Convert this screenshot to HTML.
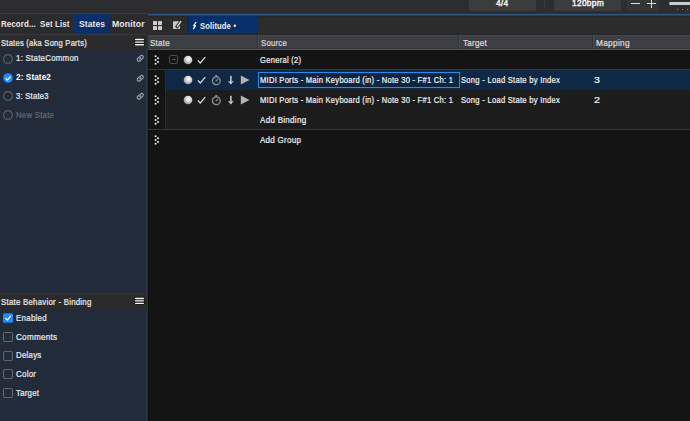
<!DOCTYPE html>
<html><head><meta charset="utf-8">
<style>
*{margin:0;padding:0;box-sizing:border-box}
html,body{width:690px;height:421px;overflow:hidden;background:#141414;font-family:"Liberation Sans",sans-serif;color:#e6e6e6}
.a{position:absolute;display:block}
.t{position:absolute;white-space:pre;line-height:1;font-size:9px;transform-origin:0 0}
.b{font-weight:bold}
</style></head><body>
<div class="a" style="left:0px;top:0px;width:690px;height:14px;background:#2d2d30;"></div>
<div class="a" style="left:148px;top:12px;width:542px;height:1px;background:#2a2c31;"></div>
<div class="a" style="left:0px;top:13px;width:148px;height:1px;background:#3a3a3d;"></div>
<div class="a" style="left:148px;top:13px;width:542px;height:1px;background:#3a302b;"></div>
<div class="a" style="left:148px;top:14px;width:542px;height:1px;background:#2d5480;"></div>
<div class="a" style="left:148px;top:15px;width:542px;height:1px;background:#1f4164;"></div>
<div class="a" style="left:148px;top:16px;width:542px;height:1px;background:#2c2422;"></div>
<div class="a" style="left:469px;top:0px;width:67px;height:11px;background:#3c3c3c;border-radius:0 0 2px 2px"></div>
<div class="t" style="left:496.32px;top:-1px;color:#f4f4f4;font-size:9px;font-weight:normal;letter-spacing:0.3px;-webkit-text-stroke:0.45px #f4f4f4;transform:scaleX(0.9254);">4/4</div>
<div class="a" style="left:544px;top:0px;width:1px;height:9px;background:#3c3c3c;"></div>
<div class="a" style="left:554px;top:0px;width:67px;height:11px;background:#3c3c3c;border-radius:0 0 2px 2px"></div>
<div class="t" style="left:571.56px;top:-1px;color:#f4f4f4;font-size:9px;font-weight:normal;letter-spacing:0.3px;-webkit-text-stroke:0.45px #f4f4f4;transform:scaleX(0.9335);">120bpm</div>
<div class="a" style="left:627px;top:0px;width:32px;height:11px;background:#353535;border-radius:0 0 2px 2px"></div>
<div class="a" style="left:631px;top:3px;width:9px;height:1.2px;background:#dddddd;"></div>
<div class="a" style="left:647px;top:3px;width:9px;height:1.2px;background:#dddddd;"></div>
<div class="a" style="left:651px;top:0px;width:1.2px;height:8px;background:#dddddd;"></div>
<div class="a" style="left:669px;top:2px;width:21px;height:3px;background:#cccccc;border-radius:2px 0 0 2px"></div>
<div class="a" style="left:677px;top:9px;width:1px;height:1.4px;background:#8a8a8a;"></div>
<div class="a" style="left:682px;top:9px;width:1px;height:1.4px;background:#8a8a8a;"></div>
<div class="a" style="left:687px;top:9px;width:1px;height:1.4px;background:#8a8a8a;"></div>
<div class="a" style="left:0px;top:14px;width:147px;height:20px;background:#2b2b2e;"></div>
<div class="a" style="left:73px;top:14px;width:37px;height:20px;background:#0a2f6a;"></div>
<div class="t" style="left:1.09px;top:20px;color:#e8e8e8;font-size:9px;font-weight:bold;letter-spacing:0.1px;-webkit-text-stroke:0px #e8e8e8;transform:scaleX(0.8831);">Record...</div>
<div class="t" style="left:39.93px;top:20px;color:#e8e8e8;font-size:9px;font-weight:bold;letter-spacing:0.1px;-webkit-text-stroke:0px #e8e8e8;transform:scaleX(0.8849);">Set List</div>
<div class="t" style="left:78.50px;top:20px;color:#e8e8e8;font-size:9px;font-weight:bold;letter-spacing:0.1px;-webkit-text-stroke:0px #e8e8e8;transform:scaleX(0.9410);">States</div>
<div class="t" style="left:111.75px;top:20px;color:#e8e8e8;font-size:9px;font-weight:bold;letter-spacing:0.1px;-webkit-text-stroke:0px #e8e8e8;transform:scaleX(0.9687);">Monitor</div>
<div class="a" style="left:0px;top:34px;width:147px;height:1px;background:#39393c;"></div>
<div class="a" style="left:0px;top:35px;width:147px;height:14px;background:#2b2b2e;"></div>
<div class="t" style="left:1.25px;top:39px;color:#ececec;font-size:9px;font-weight:normal;letter-spacing:0.3px;-webkit-text-stroke:0.22px #ececec;transform:scaleX(0.8397);">States (aka Song Parts)</div>
<svg class="a" style="left:134.4px;top:37.9px" width="11" height="9" viewBox="0 0 11 9"><rect x="0.3" y="0.2" width="10.4" height="7.80" rx="1.3" fill="#0c0c0c" fill-opacity="0.75"/><path d="M1.6 1.50H9.4" stroke="#f6f6f6" stroke-width="1.35" stroke-linecap="round"/><path d="M1.6 4.10H9.4" stroke="#f6f6f6" stroke-width="1.35" stroke-linecap="round"/><path d="M1.6 6.70H9.4" stroke="#f6f6f6" stroke-width="1.35" stroke-linecap="round"/></svg>
<div class="a" style="left:0px;top:49px;width:147px;height:245px;background:#212b3a;"></div>
<div class="a" style="left:0px;top:309px;width:147px;height:112px;background:#212b3a;"></div>
<div class="a" style="left:146px;top:49px;width:1px;height:245px;background:#2b3545;"></div>
<div class="a" style="left:146px;top:309px;width:1px;height:112px;background:#2b3545;"></div>
<div class="a" style="left:147px;top:14px;width:1px;height:407px;background:#2d2d2d;"></div>
<div class="a" style="left:148px;top:50px;width:1px;height:371px;background:#0e0e0e;"></div>
<div class="a" style="left:0px;top:294px;width:147px;height:15px;background:#2b2b2e;"></div>
<div class="t" style="left:1.23px;top:298px;color:#ececec;font-size:9px;font-weight:normal;letter-spacing:0.3px;-webkit-text-stroke:0.22px #ececec;transform:scaleX(0.8689);">State Behavior - Binding</div>
<div class="a" style="left:0px;top:293px;width:147px;height:1px;background:#323236;"></div>
<svg class="a" style="left:134.4px;top:297.4px" width="11" height="9" viewBox="0 0 11 9"><rect x="0.3" y="0.2" width="10.4" height="7.40" rx="1.3" fill="#0c0c0c" fill-opacity="0.75"/><path d="M1.6 1.50H9.4" stroke="#f6f6f6" stroke-width="1.35" stroke-linecap="round"/><path d="M1.6 3.90H9.4" stroke="#f6f6f6" stroke-width="1.35" stroke-linecap="round"/><path d="M1.6 6.30H9.4" stroke="#f6f6f6" stroke-width="1.35" stroke-linecap="round"/></svg>
<div class="a" style="left:148px;top:17px;width:542px;height:18px;background:#2c2c2f;"></div>
<div class="a" style="left:187px;top:16px;width:1px;height:19px;background:#222;"></div>
<div class="a" style="left:188px;top:16px;width:70px;height:19px;background:#072f69;"></div>
<div class="t" style="left:200.25px;top:22px;color:#f0f0f0;font-size:9px;font-weight:bold;letter-spacing:0.1px;-webkit-text-stroke:0px #f0f0f0;transform:scaleX(0.8508);">Solitude</div>
<div class="a" style="left:153px;top:21px;width:4px;height:3.5px;background:#cdcdcd;border-radius:0.6px"></div>
<div class="a" style="left:158px;top:21px;width:4px;height:3.5px;background:#cdcdcd;border-radius:0.6px"></div>
<div class="a" style="left:153px;top:26px;width:4px;height:3.5px;background:#cdcdcd;border-radius:0.6px"></div>
<div class="a" style="left:158px;top:26px;width:4px;height:3.5px;background:#cdcdcd;border-radius:0.6px"></div>
<svg class="a" style="left:170px;top:18px" width="14" height="14" viewBox="0 0 14 14"><rect x="3" y="3.2" width="7" height="7.8" rx="0.6" fill="#c8c8c8"/><path d="M11.8 2.2L6.3 9.8" stroke="#2c2c2f" stroke-width="3.2"/><path d="M11.1 3.1L7.1 8.9" stroke="#dadada" stroke-width="1.4"/></svg>
<svg class="a" style="left:190px;top:20px" width="8" height="11" viewBox="0 0 8 11"><path d="M6.2 2.1L3.5 5.9L5.7 5.6L3.2 9" fill="none" stroke="#f0f0f0" stroke-width="1.35" stroke-linejoin="bevel"/></svg>
<svg class="a" style="left:232px;top:23px" width="5" height="5" viewBox="0 0 5 5"><circle cx="2.8" cy="2.8" r="1.25" fill="#eeeeee"/></svg>
<div class="a" style="left:148px;top:35px;width:542px;height:14px;background:#3e3f44;"></div>
<div class="a" style="left:148px;top:34px;width:542px;height:1px;background:#28282b;"></div>
<div class="a" style="left:148px;top:35px;width:542px;height:1px;background:#45464b;"></div>
<div class="a" style="left:148px;top:48px;width:542px;height:1px;background:#37383d;"></div>
<div class="a" style="left:148px;top:49px;width:542px;height:1px;background:#505156;"></div>
<div class="t" style="left:149.92px;top:39px;color:#dedede;font-size:9px;font-weight:normal;letter-spacing:0.3px;-webkit-text-stroke:0.22px #dedede;transform:scaleX(0.8889);">State</div>
<div class="t" style="left:261.24px;top:39px;color:#dedede;font-size:9px;font-weight:normal;letter-spacing:0.3px;-webkit-text-stroke:0.22px #dedede;transform:scaleX(0.8573);">Source</div>
<div class="t" style="left:462.55px;top:39px;color:#dedede;font-size:9px;font-weight:normal;letter-spacing:0.3px;-webkit-text-stroke:0.22px #dedede;transform:scaleX(0.9003);">Target</div>
<div class="t" style="left:596.40px;top:39px;color:#dedede;font-size:9px;font-weight:normal;letter-spacing:0.3px;-webkit-text-stroke:0.22px #dedede;transform:scaleX(0.9248);">Mapping</div>
<div class="a" style="left:257px;top:35px;width:1px;height:14px;background:#323337;"></div>
<div class="a" style="left:258px;top:35px;width:1px;height:14px;background:#4b4c51;"></div>
<div class="a" style="left:458px;top:35px;width:1px;height:14px;background:#323337;"></div>
<div class="a" style="left:459px;top:35px;width:1px;height:14px;background:#4b4c51;"></div>
<div class="a" style="left:592px;top:35px;width:1px;height:14px;background:#323337;"></div>
<div class="a" style="left:593px;top:35px;width:1px;height:14px;background:#4b4c51;"></div>
<div class="a" style="left:148px;top:69px;width:542px;height:1px;background:#363636;"></div>
<div class="a" style="left:166px;top:70px;width:524px;height:59px;background:#1c1c1c;"></div>
<div class="a" style="left:166px;top:70px;width:524px;height:20px;background:#0e2845;"></div>
<div class="a" style="left:165px;top:70px;width:1px;height:59px;background:#2e2e2e;"></div>
<div class="a" style="left:148px;top:129px;width:542px;height:1px;background:#363636;"></div>
<svg class="a" style="left:150px;top:52px" width="12" height="16" viewBox="0 0 12 16"><circle cx="5.599999999999994" cy="4.2" r="1" fill="#f2f2f2"/><circle cx="5.599999999999994" cy="8" r="1" fill="#f2f2f2"/><circle cx="5.599999999999994" cy="11.8" r="1" fill="#f2f2f2"/><circle cx="8" cy="6.2" r="1" fill="#f2f2f2"/><circle cx="8" cy="10.0" r="1" fill="#f2f2f2"/></svg>
<svg class="a" style="left:150px;top:72px" width="12" height="16" viewBox="0 0 12 16"><circle cx="5.599999999999994" cy="4.2" r="1" fill="#f2f2f2"/><circle cx="5.599999999999994" cy="8" r="1" fill="#f2f2f2"/><circle cx="5.599999999999994" cy="11.8" r="1" fill="#f2f2f2"/><circle cx="8" cy="6.2" r="1" fill="#f2f2f2"/><circle cx="8" cy="10.0" r="1" fill="#f2f2f2"/></svg>
<svg class="a" style="left:150px;top:92px" width="12" height="16" viewBox="0 0 12 16"><circle cx="5.599999999999994" cy="4.2" r="1" fill="#f2f2f2"/><circle cx="5.599999999999994" cy="8" r="1" fill="#f2f2f2"/><circle cx="5.599999999999994" cy="11.8" r="1" fill="#f2f2f2"/><circle cx="8" cy="6.2" r="1" fill="#f2f2f2"/><circle cx="8" cy="10.0" r="1" fill="#f2f2f2"/></svg>
<svg class="a" style="left:150px;top:112px" width="12" height="16" viewBox="0 0 12 16"><circle cx="5.599999999999994" cy="4.2" r="1" fill="#f2f2f2"/><circle cx="5.599999999999994" cy="8" r="1" fill="#f2f2f2"/><circle cx="5.599999999999994" cy="11.8" r="1" fill="#f2f2f2"/><circle cx="8" cy="6.2" r="1" fill="#f2f2f2"/><circle cx="8" cy="10.0" r="1" fill="#f2f2f2"/></svg>
<svg class="a" style="left:150px;top:132px" width="12" height="16" viewBox="0 0 12 16"><circle cx="5.599999999999994" cy="4.2" r="1" fill="#f2f2f2"/><circle cx="5.599999999999994" cy="8" r="1" fill="#f2f2f2"/><circle cx="5.599999999999994" cy="11.8" r="1" fill="#f2f2f2"/><circle cx="8" cy="6.2" r="1" fill="#f2f2f2"/><circle cx="8" cy="10.0" r="1" fill="#f2f2f2"/></svg>
<div class="a" style="left:169.2px;top:55.3px;width:8.6px;height:8.5px;background:transparent;border:1px solid #4c4c4c;border-radius:2px"></div>
<div class="a" style="left:171.7px;top:59.2px;width:3.6px;height:1px;background:#5c5c5c;"></div>
<svg class="a" style="left:182.6px;top:55.3px" width="10" height="10" viewBox="0 0 10 10"><defs><radialGradient id="g60" cx="0.58" cy="0.38" r="0.6"><stop offset="0" stop-color="#ffffff"/><stop offset="0.55" stop-color="#d4d4d4"/><stop offset="1" stop-color="#9a9a9a"/></radialGradient></defs><circle cx="5" cy="5" r="4.35" fill="url(#g60)"/></svg>
<svg class="a" style="left:197px;top:56px" width="10" height="9" viewBox="0 0 10 9"><path d="M0.9 4.3L3.3 7L8.3 1.1" fill="none" stroke="#dddddd" stroke-width="1.2"/></svg>
<svg class="a" style="left:182.6px;top:75.3px" width="10" height="10" viewBox="0 0 10 10"><defs><radialGradient id="g80" cx="0.58" cy="0.38" r="0.6"><stop offset="0" stop-color="#ffffff"/><stop offset="0.55" stop-color="#d4d4d4"/><stop offset="1" stop-color="#9a9a9a"/></radialGradient></defs><circle cx="5" cy="5" r="4.35" fill="url(#g80)"/></svg>
<svg class="a" style="left:197px;top:76px" width="10" height="9" viewBox="0 0 10 9"><path d="M0.9 4.3L3.3 7L8.3 1.1" fill="none" stroke="#dddddd" stroke-width="1.2"/></svg>
<svg class="a" style="left:210px;top:74px" width="13" height="12" viewBox="0 0 13 12"><circle cx="6.3" cy="6.7" r="3.9" fill="none" stroke="#8f9296" stroke-width="1.3"/><rect x="5.2" y="1.1" width="2.2" height="1.6" rx="0.5" fill="#8f9296"/><path d="M5.7 7.4L8.3 4.9" stroke="#8f9296" stroke-width="1.2"/></svg>
<svg class="a" style="left:227px;top:75px" width="8" height="11" viewBox="0 0 8 11"><rect x="3" y="0.8" width="1.7" height="6" fill="#b9bdc2"/><path d="M0.9 5.8L3.85 6.7L6.8 5.8L3.85 9.6Z" fill="#d2d4d6"/></svg>
<svg class="a" style="left:240px;top:75px" width="10" height="10" viewBox="0 0 10 10"><path d="M0.8 0.5L9.5 5L0.8 9.5z" fill="#b4b4b4"/></svg>
<svg class="a" style="left:182.6px;top:95.3px" width="10" height="10" viewBox="0 0 10 10"><defs><radialGradient id="g100" cx="0.58" cy="0.38" r="0.6"><stop offset="0" stop-color="#ffffff"/><stop offset="0.55" stop-color="#d4d4d4"/><stop offset="1" stop-color="#9a9a9a"/></radialGradient></defs><circle cx="5" cy="5" r="4.35" fill="url(#g100)"/></svg>
<svg class="a" style="left:197px;top:96px" width="10" height="9" viewBox="0 0 10 9"><path d="M0.9 4.3L3.3 7L8.3 1.1" fill="none" stroke="#dddddd" stroke-width="1.2"/></svg>
<svg class="a" style="left:210px;top:94px" width="13" height="12" viewBox="0 0 13 12"><circle cx="6.3" cy="6.7" r="3.9" fill="none" stroke="#8f9296" stroke-width="1.3"/><rect x="5.2" y="1.1" width="2.2" height="1.6" rx="0.5" fill="#8f9296"/><path d="M5.7 7.4L8.3 4.9" stroke="#8f9296" stroke-width="1.2"/></svg>
<svg class="a" style="left:227px;top:95px" width="8" height="11" viewBox="0 0 8 11"><rect x="3" y="0.8" width="1.7" height="6" fill="#b9bdc2"/><path d="M0.9 5.8L3.85 6.7L6.8 5.8L3.85 9.6Z" fill="#d2d4d6"/></svg>
<svg class="a" style="left:240px;top:95px" width="10" height="10" viewBox="0 0 10 10"><path d="M0.8 0.5L9.5 5L0.8 9.5z" fill="#b4b4b4"/></svg>
<div class="t" style="left:260.28px;top:56px;color:#f0f0f0;font-size:9px;font-weight:normal;letter-spacing:0.3px;-webkit-text-stroke:0.22px #f0f0f0;transform:scaleX(0.8455);">General (2)</div>
<div class="a" style="left:258px;top:72px;width:202px;height:16px;background:#0b2543;border:1.5px solid #2a8ae6"></div>
<div class="t" style="left:260.24px;top:76px;color:#f4f4f4;font-size:9px;font-weight:normal;letter-spacing:0.3px;-webkit-text-stroke:0.22px #f4f4f4;transform:scaleX(0.8416);">MIDI Ports - Main Keyboard (in) - Note 30 - F#1 Ch: 1</div>
<div class="t" style="left:461.04px;top:76px;color:#f0f0f0;font-size:9px;font-weight:normal;letter-spacing:0.3px;-webkit-text-stroke:0.22px #f0f0f0;transform:scaleX(0.8480);">Song - Load State by Index</div>
<div class="t" style="left:594.41px;top:76px;color:#f0f0f0;font-size:9px;font-weight:normal;letter-spacing:0.3px;-webkit-text-stroke:0.22px #f0f0f0;transform:scaleX(1.1850);">3</div>
<div class="t" style="left:260.24px;top:96px;color:#f0f0f0;font-size:9px;font-weight:normal;letter-spacing:0.3px;-webkit-text-stroke:0.22px #f0f0f0;transform:scaleX(0.8416);">MIDI Ports - Main Keyboard (in) - Note 30 - F#1 Ch: 1</div>
<div class="t" style="left:461.04px;top:96px;color:#f0f0f0;font-size:9px;font-weight:normal;letter-spacing:0.3px;-webkit-text-stroke:0.22px #f0f0f0;transform:scaleX(0.8480);">Song - Load State by Index</div>
<div class="t" style="left:594.38px;top:96px;color:#f0f0f0;font-size:9px;font-weight:normal;letter-spacing:0.3px;-webkit-text-stroke:0.22px #f0f0f0;transform:scaleX(1.2066);">2</div>
<div class="t" style="left:259.79px;top:116px;color:#f0f0f0;font-size:9px;font-weight:normal;letter-spacing:0.3px;-webkit-text-stroke:0.22px #f0f0f0;transform:scaleX(0.8955);">Add Binding</div>
<div class="t" style="left:259.79px;top:136px;color:#f0f0f0;font-size:9px;font-weight:normal;letter-spacing:0.3px;-webkit-text-stroke:0.22px #f0f0f0;transform:scaleX(0.8920);">Add Group</div>
<svg class="a" style="left:3px;top:54px" width="10" height="10" viewBox="0 0 10 10"><circle cx="5" cy="5" r="4.35" fill="none" stroke="#67645f" stroke-width="1.1"/></svg>
<svg class="a" style="left:3px;top:72.7px" width="10" height="10" viewBox="0 0 10 10"><circle cx="5" cy="5" r="4.8" fill="#1a8cff"/><path d="M2.6 5.2L4.4 7.1L7.6 3.3" fill="none" stroke="#fff" stroke-width="1.3"/></svg>
<svg class="a" style="left:3px;top:91px" width="10" height="10" viewBox="0 0 10 10"><circle cx="5" cy="5" r="4.35" fill="none" stroke="#67645f" stroke-width="1.1"/></svg>
<svg class="a" style="left:3px;top:109.6px" width="10" height="10" viewBox="0 0 10 10"><circle cx="5" cy="5" r="4.35" fill="none" stroke="#67645f" stroke-width="1.1"/></svg>
<svg class="a" style="left:135px;top:53.3px" width="10" height="10" viewBox="0 0 10 10"><g transform="rotate(-40 5.25 5.3)" fill="none" stroke="#a2a8af" stroke-width="1.05"><rect x="1.75" y="3.65" width="7" height="3.3" rx="1.65"/><path d="M4.1 5.3H6.4" stroke-width="1.2"/></g></svg>
<svg class="a" style="left:135px;top:72.5px" width="10" height="10" viewBox="0 0 10 10"><g transform="rotate(-40 5.25 5.3)" fill="none" stroke="#a2a8af" stroke-width="1.05"><rect x="1.75" y="3.65" width="7" height="3.3" rx="1.65"/><path d="M4.1 5.3H6.4" stroke-width="1.2"/></g></svg>
<svg class="a" style="left:135px;top:90.8px" width="10" height="10" viewBox="0 0 10 10"><g transform="rotate(-40 5.25 5.3)" fill="none" stroke="#a2a8af" stroke-width="1.05"><rect x="1.75" y="3.65" width="7" height="3.3" rx="1.65"/><path d="M4.1 5.3H6.4" stroke-width="1.2"/></g></svg>
<div class="t" style="left:15.70px;top:54px;color:#ececec;font-size:9px;font-weight:normal;letter-spacing:0.3px;-webkit-text-stroke:0.22px #ececec;transform:scaleX(0.8740);">1: StateCommon</div>
<div class="t" style="left:15.71px;top:73px;color:#ffffff;font-size:9px;font-weight:bold;letter-spacing:0.1px;-webkit-text-stroke:0px #ffffff;transform:scaleX(0.9100);">2: State2</div>
<div class="t" style="left:15.72px;top:92px;color:#ececec;font-size:9px;font-weight:normal;letter-spacing:0.3px;-webkit-text-stroke:0.22px #ececec;transform:scaleX(0.8467);">3: State3</div>
<div class="t" style="left:15.53px;top:111px;color:#65686c;font-size:9px;font-weight:normal;letter-spacing:0.3px;-webkit-text-stroke:0.22px #65686c;transform:scaleX(0.8621);">New State</div>
<svg class="a" style="left:3px;top:313.3px" width="10" height="10" viewBox="0 0 10 10"><rect x="0" y="0.3" width="10" height="9.4" rx="1.5" fill="#1a8cff"/><path d="M2.4 5L4.3 7.1L8 2.6" fill="none" stroke="#fff" stroke-width="1.3"/></svg>
<div class="t" style="left:15.52px;top:314px;color:#ececec;font-size:9px;font-weight:normal;letter-spacing:0.3px;-webkit-text-stroke:0.22px #ececec;transform:scaleX(0.8815);">Enabled</div>
<svg class="a" style="left:3px;top:332px" width="10" height="10" viewBox="0 0 10 10"><rect x="0.55" y="0.55" width="8.9" height="8.9" rx="1.5" fill="none" stroke="#67645f" stroke-width="1.1"/></svg>
<div class="t" style="left:15.66px;top:333px;color:#ececec;font-size:9px;font-weight:normal;letter-spacing:0.3px;-webkit-text-stroke:0.22px #ececec;transform:scaleX(0.9008);">Comments</div>
<svg class="a" style="left:3px;top:350.5px" width="10" height="10" viewBox="0 0 10 10"><rect x="0.55" y="0.55" width="8.9" height="8.9" rx="1.5" fill="none" stroke="#67645f" stroke-width="1.1"/></svg>
<div class="t" style="left:15.52px;top:351px;color:#ececec;font-size:9px;font-weight:normal;letter-spacing:0.3px;-webkit-text-stroke:0.22px #ececec;transform:scaleX(0.8720);">Delays</div>
<svg class="a" style="left:3px;top:369px" width="10" height="10" viewBox="0 0 10 10"><rect x="0.55" y="0.55" width="8.9" height="8.9" rx="1.5" fill="none" stroke="#67645f" stroke-width="1.1"/></svg>
<div class="t" style="left:15.67px;top:370px;color:#ececec;font-size:9px;font-weight:normal;letter-spacing:0.3px;-webkit-text-stroke:0.22px #ececec;transform:scaleX(0.8778);">Color</div>
<svg class="a" style="left:3px;top:387.7px" width="10" height="10" viewBox="0 0 10 10"><rect x="0.55" y="0.55" width="8.9" height="8.9" rx="1.5" fill="none" stroke="#67645f" stroke-width="1.1"/></svg>
<div class="t" style="left:15.76px;top:389px;color:#ececec;font-size:9px;font-weight:normal;letter-spacing:0.3px;-webkit-text-stroke:0.22px #ececec;transform:scaleX(0.8661);">Target</div>
</body></html>
